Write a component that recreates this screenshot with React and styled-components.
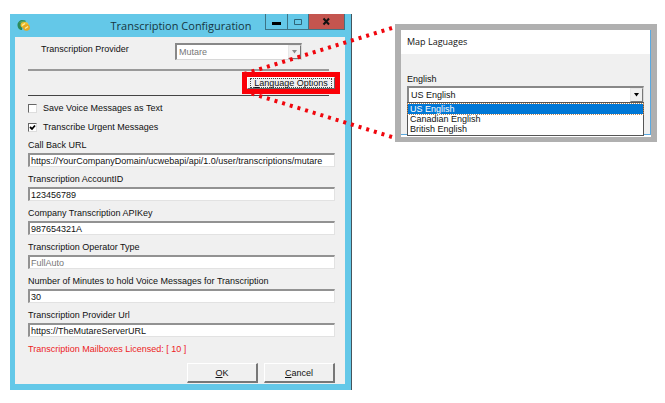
import React, { useState } from 'react';
import styled, { createGlobalStyle } from 'styled-components';

const fields = [
  { id: 'callback', label: 'Call Back URL', value: 'https://YourCompanyDomain/ucwebapi/api/1.0/user/transcriptions/mutare' },
  { id: 'account', label: 'Transcription AccountID', value: '123456789' },
  { id: 'apikey', label: 'Company Transcription APIKey', value: '987654321A' },
  { id: 'operator', label: 'Transcription Operator Type', value: 'FullAuto', disabled: true },
  { id: 'minutes', label: 'Number of Minutes to hold Voice Messages for Transcription', value: '30' },
  { id: 'url', label: 'Transcription Provider Url', value: 'https://TheMutareServerURL' },
];

const languages = ['US English', 'Canadian English', 'British English'];

const AppIcon = () => (
  <svg width="14" height="14" viewBox="0 0 14 14" aria-hidden="true">
    <path d="M9 2 C5 -0.5 0.5 2 0.5 6 C0.5 9 2.5 11 5 11 L6 5 Z" fill="#2c8a5a" />
    <path d="M2 4 Q5 0.5 8.5 2 L6 4.5 Z" fill="#5ba45c" />
    <ellipse cx="7.5" cy="6" rx="4" ry="3" fill="#f0c030" />
    <ellipse cx="9.5" cy="8.5" rx="3.5" ry="3.2" fill="#e6a823" />
    <path d="M5 6.5 L8 4.5 M8 9.5 L11 7.5" stroke="#fdf0a0" strokeWidth="1.4" />
  </svg>
);

const Arrow = ({ disabled }) => (
  <ArrowBox aria-hidden="true">
    <svg width="7" height="4" viewBox="0 0 7 4">
      <path d="M1 0 H6 L3.5 3.5 Z" fill={disabled ? '#8a8a8a' : '#000'} />
    </svg>
  </ArrowBox>
);

const Callout = () => (
  <CalloutLines viewBox="0 0 647 128" preserveAspectRatio="none" aria-hidden="true">
    <path d="M382 14 L234 60" />
    <path d="M382 123 L240 79" />
  </CalloutLines>
);

function ConfigWindow() {
  const [values, setValues] = useState(
    Object.fromEntries(fields.map(field => [field.id, field.value]))
  );

  return (
    <Window>
      <TitleBar>
        <AppIcon />
        <Title>Transcription Configuration</Title>
        <WindowButtons>
          <WindowButton aria-label="Minimize">
            <svg width="9" height="9"><path d="M0 5 H9 V8 H0 Z" fill="#000" /></svg>
          </WindowButton>
          <WindowButton aria-label="Maximize">
            <svg width="9" height="9"><path d="M0.5 2.5 H7.5 V7.5 H0.5 Z" fill="none" stroke="#2f6478" /></svg>
          </WindowButton>
          <WindowButton $close aria-label="Close">
            <svg width="9" height="9"><path d="M1.5 1.5 L7 7.5 M7 1.5 L1.5 7.5" stroke="#111" strokeWidth="2" /></svg>
          </WindowButton>
        </WindowButtons>
      </TitleBar>
      <Body>
        <ProviderRow>
          <label htmlFor="provider">Transcription Provider</label>
          <SelectBox>
            <Select id="provider" disabled defaultValue="Mutare">
              <option>Mutare</option>
            </Select>
            <Arrow disabled />
          </SelectBox>
        </ProviderRow>
        <LanguageRow>
          <Highlight>
            <LanguageButton><FocusRing><u>L</u>anguage Options</FocusRing></LanguageButton>
          </Highlight>
        </LanguageRow>
        <Checks>
          <CheckLabel><Checkbox type="checkbox" />Save Voice Messages as Text</CheckLabel>
          <CheckLabel><Checkbox type="checkbox" defaultChecked />Transcribe Urgent Messages</CheckLabel>
        </Checks>
        <Fields>
          {fields.map(({ id, label, disabled }) => (
            <Field key={id}>
              <label htmlFor={id}>{label}</label>
              <TextInput
                id={id}
                disabled={disabled}
                value={values[id]}
                onChange={e => setValues({ ...values, [id]: e.target.value })}
              />
            </Field>
          ))}
        </Fields>
        <Licensed>Transcription Mailboxes Licensed: [ 10 ]</Licensed>
        <Actions>
          <Button><span><u>O</u>K</span></Button>
          <Button><span><u>C</u>ancel</span></Button>
        </Actions>
      </Body>
    </Window>
  );
}

function LanguagePanel() {
  const [language, setLanguage] = useState(languages[0]);

  return (
    <Panel>
      <PanelInner>
        <PanelTitle>Map Laguages</PanelTitle>
        <PanelBody>
          <label htmlFor="language">English</label>
          <SelectBox>
            <Select id="language" value={language} onChange={e => setLanguage(e.target.value)}>
              {languages.map(name => <option key={name}>{name}</option>)}
            </Select>
            <Arrow />
            <Options role="listbox">
              {languages.map(name => (
                <Option
                  key={name}
                  role="option"
                  aria-selected={name === language}
                  $active={name === language}
                  onClick={() => setLanguage(name)}
                >
                  {name}
                </Option>
              ))}
            </Options>
          </SelectBox>
        </PanelBody>
      </PanelInner>
    </Panel>
  );
}

const App = () => (
  <>
    <GlobalStyle />
    <Page>
      <ConfigWindow />
      <LanguagePanel />
      <Callout />
    </Page>
  </>
);

const GlobalStyle = createGlobalStyle`
  * {
    box-sizing: border-box;
  }

  body {
    margin: 0;
    background: #fff;
    color: #111;
    font: 9px/12px 'Liberation Sans', Arial, sans-serif;
  }

  button, input, select {
    font: inherit;
    color: inherit;
    border-radius: 0;
  }
`

const Page = styled.main`
  position: relative;
  display: grid;
  grid-template-columns: 341fr 262fr;
  column-gap: 44px;
  align-items: start;
  margin: 14px 8px 12px 10px;
`

const Window = styled.section`
  padding: 0 6px 6px 5px;
  background: #64c8e8;
  box-shadow: 1px 0 #45545c;
`

const TitleBar = styled.header`
  display: grid;
  grid-template-columns: 1fr auto 1fr;
  align-items: center;
  height: 23px;
  padding-left: 2px;
`

const Title = styled.h1`
  margin: 0;
  color: #173641;
  font: 11px/20px 'Open Sans', 'Noto Sans', sans-serif;
`

const WindowButtons = styled.div`
  display: flex;
  align-self: start;
  justify-self: end;
  border: 1px solid #3c7386;
  border-top: 0;
`

const WindowButton = styled.button`
  display: flex;
  align-items: center;
  justify-content: center;
  width: ${props => props.$close ? 36 : 21}px;
  height: 15px;
  padding: 0;
  border: 0;
  border-left: 1px solid #3c7386;
  background: ${props => props.$close ? '#c4554f' : '#64c8e8'};

  &:first-child {
    border-left: 0;
  }
`

const Body = styled.div`
  padding: 6px 10px 1px 13px;
  background: #f0f0f0;
`

const ProviderRow = styled.div`
  display: grid;
  grid-template-columns: 134fr 127fr;
  margin: 0 33px 9px 13px;
`

const SelectBox = styled.div`
  position: relative;
  display: grid;
  height: 17px;
  border: 1px solid #d8d8d8;
  border-top: 2px solid #888;
  border-left: 2px solid #888;
  background: #fff;
`

const Select = styled.select`
  grid-area: 1 / 1;
  appearance: none;
  width: 100%;
  padding: 0 16px 0 2px;
  border: 0;
  background: transparent;

  &:disabled {
    color: #777;
    opacity: 1;
  }
`

const ArrowBox = styled.span`
  grid-area: 1 / 1;
  justify-self: end;
  display: flex;
  align-items: center;
  justify-content: center;
  width: 13px;
  border: 1px solid #e8e8e8;
  border-right-color: #777;
  border-bottom-color: #777;
  background: #f0f0f0;
  pointer-events: none;
`

const LanguageRow = styled.div`
  display: flex;
  justify-content: flex-end;
  height: 27px;
  margin-right: 6px;
  padding-top: 1px;
  border-top: 2px solid #999;
  border-bottom: 1px solid #444;
`

const Highlight = styled.div`
  height: 22px;
  margin-right: -11px;
  border: 5px solid #fb0007;
`

const LanguageButton = styled.button`
  display: block;
  width: 88px;
  height: 12px;
  padding: 0 2px;
  border: 1px solid #fff;
  border-right-color: #666;
  border-bottom-color: #666;
  background: #f0f0f0;
  line-height: 8px;
`

const FocusRing = styled.span`
  display: block;
  border: 1px dotted #444;
  white-space: nowrap;
`

const Checks = styled.div`
  display: grid;
  gap: 7px;
  padding: 6px 0;
`

const CheckLabel = styled.label`
  display: flex;
  align-items: center;
  gap: 6px;
`

const Checkbox = styled.input`
  appearance: none;
  width: 9px;
  height: 9px;
  margin: 0;
  border: 1px solid #ddd;
  border-top-color: #666;
  border-left-color: #666;
  background: #fff;

  &:checked {
    background: #fff url("data:image/svg+xml,%3Csvg xmlns='http://www.w3.org/2000/svg' viewBox='0 0 7 7'%3E%3Cpath d='M1 3 L3 5 L6 1.5' fill='none' stroke='%23000' stroke-width='1.8'/%3E%3C/svg%3E");
  }
`

const Fields = styled.div`
  display: grid;
  gap: 6px;
`

const Field = styled.div`
  display: grid;
  gap: 2px;
`

const TextInput = styled.input`
  width: 100%;
  height: 14px;
  padding: 0 1px;
  border: 1px solid #e2e2e2;
  border-top: 2px solid #929292;
  border-left: 2px solid #929292;
  background: #fff;

  &:disabled {
    color: #777;
  }
`

const Licensed = styled.p`
  margin: 6px 0 8px;
  color: #ed1c24;
`

const Actions = styled.div`
  display: flex;
  justify-content: flex-end;
  gap: 6px;
`

const Button = styled.button`
  width: 71px;
  height: 20px;
  padding: 0;
  border: 1px solid #fff;
  border-right: 2px solid #777;
  border-bottom: 2px solid #777;
  background: #f0f0f0;
`

const Panel = styled.section`
  margin-top: 10px;
  padding: 6px;
  background: #b0b0b0;
`

const PanelInner = styled.div`
  height: 105px;
  margin-bottom: 1px;
  border-right: 1px solid #5aa9e0;
  border-bottom: 1px solid #5aa9e0;
  background: #f0f0f0;
  box-shadow: 0 2px #fff;
`

const PanelTitle = styled.h2`
  margin: 0;
  padding: 0 6px;
  background: #fff;
  font: 9px/24px 'Open Sans', 'Noto Sans', sans-serif;
`

const PanelBody = styled.div`
  display: grid;
  gap: 1px;
  padding: 19px 6px 0;
`

const Options = styled.ul`
  position: absolute;
  top: 100%;
  left: -2px;
  right: -1px;
  margin: 0;
  padding: 1px 0;
  border: 1px solid #555;
  background: #fff;
  list-style: none;
`

const Option = styled.li`
  height: 10px;
  padding: 0 2px;
  background: ${props => props.$active ? '#0078d7' : '#fff'};
  color: ${props => props.$active ? '#fff' : '#111'};
  line-height: 10px;
  outline: ${props => props.$active ? '1px dotted #b98555' : 'none'};
`

const CalloutLines = styled.svg`
  position: absolute;
  top: 0;
  left: 0;
  width: 100%;
  height: 128px;
  pointer-events: none;

  path {
    fill: none;
    stroke: #f0060d;
    stroke-width: 4;
    stroke-dasharray: 3 5;
  }
`

export default App;
